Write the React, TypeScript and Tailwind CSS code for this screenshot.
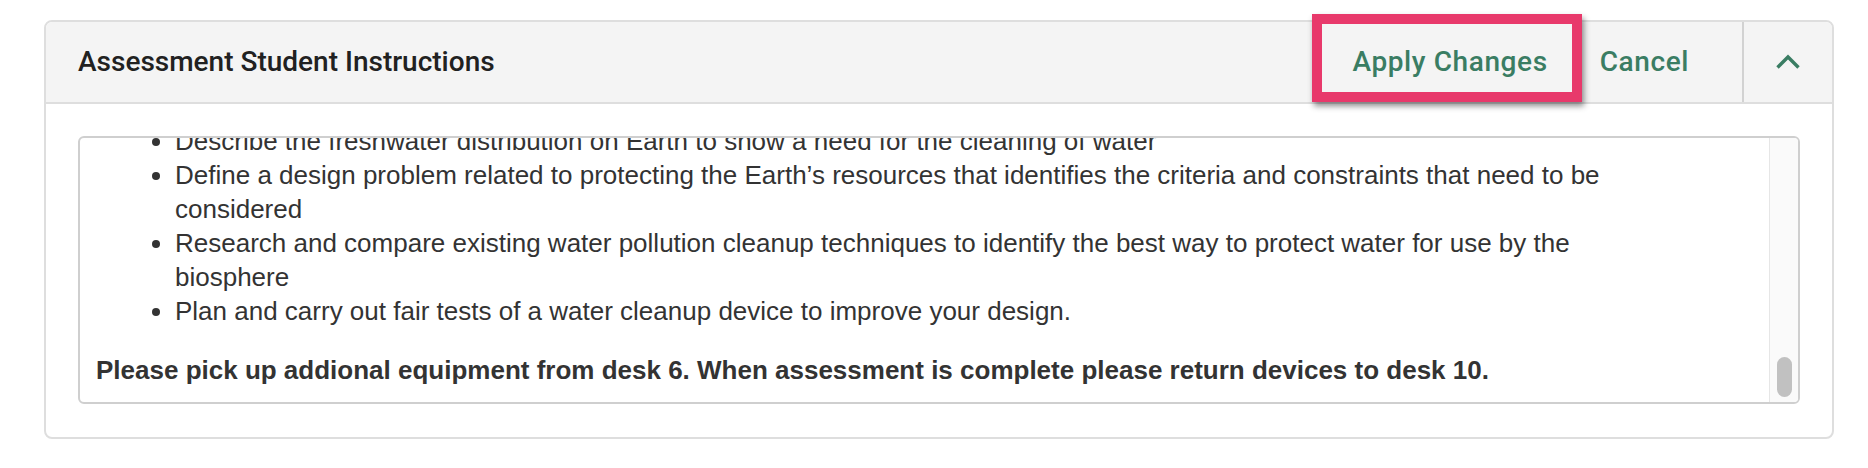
import React from "react";

export default function App() {
  return (
    <div className="w-[1868px] h-[468px] bg-white pt-[20px] pl-[44px]">
      <div className="w-[1790px] h-[419px] border-2 border-[#dedede] rounded-[8px] flex flex-col">
        <header className="h-[82px] shrink-0 bg-[#f4f4f4] border-b-2 border-[#dedede] rounded-t-[6px] flex items-stretch">
          <h2 className="flex-1 flex items-center pl-[32px] text-[28px] font-medium text-[#212121] font-['Roboto',sans-serif]">
            Assessment Student Instructions
          </h2>
          <div className="relative flex items-center">
            <button className="px-[26px] h-full text-[28px] font-medium tracking-[0.6px] text-[#3a7d63] font-['Roboto',sans-serif]">
              Apply Changes
            </button>
            <span className="pointer-events-none absolute -top-[8px] bottom-0 -left-[14px] -right-[8px] border-[10px] border-[#e8396b] shadow-[2px_4px_6px_rgba(0,0,0,0.45)]"></span>
          </div>
          <button className="pl-[26px] pr-[53px] flex items-center text-[28px] font-medium tracking-[0.6px] text-[#3a7d63] font-['Roboto',sans-serif]">
            Cancel
          </button>
          <div className="w-[90px] border-l-2 border-[#d2d2d2] flex items-center justify-center">
            <svg width="24" height="16" viewBox="0 0 24 16" fill="none">
              <polyline points="1.5,13.5 12,3 22.5,13.5" stroke="#3a7d63" strokeWidth="3.4" />
            </svg>
          </div>
        </header>
        <div className="min-h-0 px-[32px] pt-[32px]">
          <div className="h-[268px] border-2 border-[#cfcfcf] rounded-[6px] flex overflow-hidden">
            <div className="flex-1 min-h-0 flex flex-col justify-end overflow-hidden pl-[16px] pr-[130px] pb-[15px] text-[26px] leading-[34px] text-[#333333] font-['Liberation_Sans',Arial,sans-serif]">
              <div>
                <ul className="list-disc pl-[79px]">
                  <li>Describe the freshwater distribution on Earth to show a need for the cleaning of water</li>
                  <li>Define a design problem related to protecting the Earth’s resources that identifies the criteria and constraints that need to be considered</li>
                  <li>Research and compare existing water pollution cleanup techniques to identify the best way to protect water for use by the biosphere</li>
                  <li>Plan and carry out fair tests of a water cleanup device to improve your design.</li>
                </ul>
                <p className="mt-[25px] font-bold">
                  Please pick up addional equipment from desk 6. When assessment is complete please return devices to desk 10.
                </p>
              </div>
            </div>
            <div className="w-[29px] shrink-0 bg-[#fafafa] border-l border-[#e6e6e6] flex flex-col justify-end items-center pb-[5px]">
              <div className="w-[15px] h-[40px] rounded-full bg-[#c1c1c1]"></div>
            </div>
          </div>
        </div>
      </div>
    </div>
  );
}
